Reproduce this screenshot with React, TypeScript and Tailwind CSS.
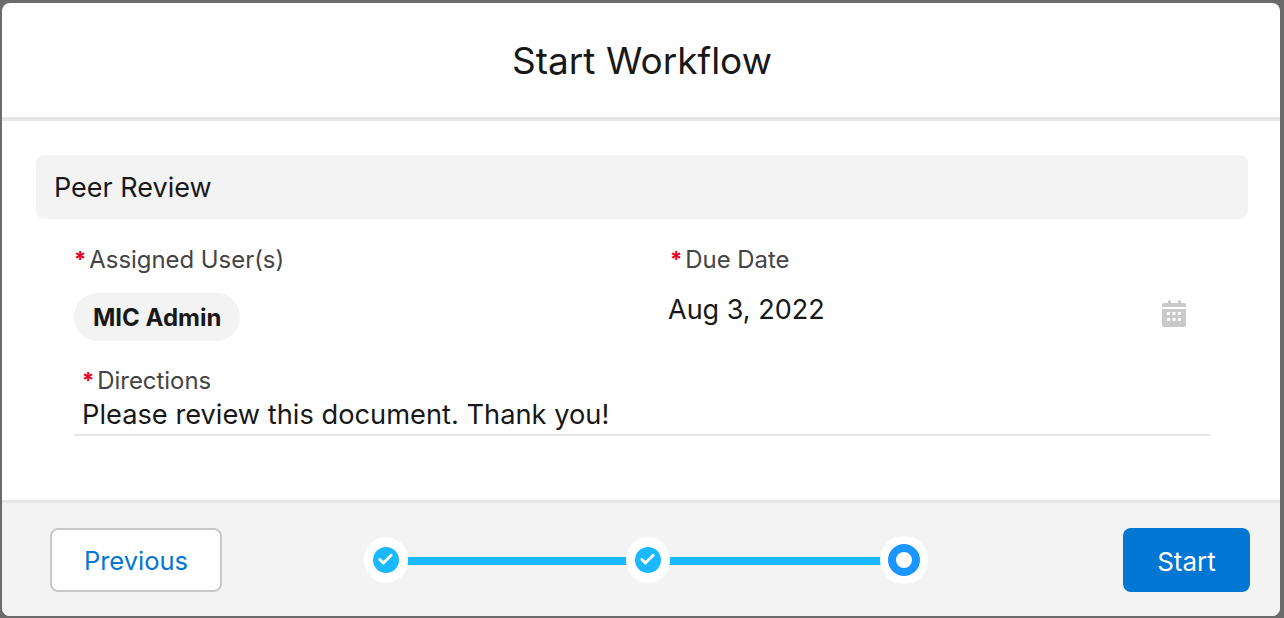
import { Check } from 'lucide-react';

const font = "font-['Inter','Noto_Sans',sans-serif]";

function Label({ text }: { text: string }) {
  return (
    <div className="flex items-start text-[23.9px] leading-[28px] text-[#444444]">
      <span className="mr-[3px] text-[22px] leading-[26px] font-bold text-[#ea001e]">*</span>
      <span>{text}</span>
    </div>
  );
}

function DoneStep() {
  return (
    <div className="z-10 flex h-[46px] w-[44px] shrink-0 items-center justify-center rounded-full bg-white">
      <div className="flex h-[26px] w-[26px] items-center justify-center rounded-full bg-[#1ab9ff]">
        <Check size={17} strokeWidth={4} color="#ffffff" />
      </div>
    </div>
  );
}

function CalendarIcon() {
  return (
    <svg width="24" height="27" viewBox="0 0 24 27" fill="#c9c9c9">
      <rect x="6" y="0" width="3" height="5" rx="1.5" />
      <rect x="16" y="0" width="3" height="5" rx="1.5" />
      <path d="M1.5 3h21A1.5 1.5 0 0 1 24 4.5V7H0V4.5A1.5 1.5 0 0 1 1.5 3z" />
      <path
        fillRule="evenodd"
        d="M0 9h24v16a2 2 0 0 1-2 2H2a2 2 0 0 1-2-2zM5 12h3v3H5zM10.5 12h3v3h-3zM16 12h3v3h-3zM5 18h3v3H5zM10.5 18h3v3h-3zM16 18h3v3h-3z"
      />
    </svg>
  );
}

export default function App() {
  return (
    <div className={`${font} h-[618px] w-[1284px] overflow-hidden bg-[#6b6b6b] pt-[3px] pr-[4px] pb-[2px] pl-[2px]`}>
      <div className="flex h-full flex-col overflow-hidden rounded-[8px] bg-white">
        {/* Header */}
        <div className="flex h-[118px] shrink-0 items-center justify-center border-b-4 border-[#e5e5e5] pt-[2px] pl-[2px]">
          <h1 className="text-[37px] leading-[44px] font-normal text-[#181818]">Start Workflow</h1>
        </div>

        {/* Body */}
        <div className="flex-1 px-[34px] pt-[34px]">
          <div className="flex h-[64px] w-[1212px] items-center rounded-[8px] bg-[#f3f3f3] px-[18px] pt-[2px] text-[27px] text-[#181818]">
            Peer Review
          </div>

          <div className="flex pt-[27px] pl-[38px]">
            <div className="w-[594px]">
              <Label text="Assigned User(s)" />
              <div className="mt-[19px] inline-flex h-[48px] items-center rounded-full bg-[#f3f3f3] px-[19px] pt-[2px] text-[24px] font-bold text-[#181818]">
                MIC Admin
              </div>
            </div>
            <div className="flex w-[518px] flex-col">
              <div className="pl-[2px]">
                <Label text="Due Date" />
              </div>
              <div className="mt-[16px] flex items-start justify-between">
                <span className="text-[27px] leading-[40px] text-[#181818]">Aug 3, 2022</span>
                <div className="mt-[10px]">
                  <CalendarIcon />
                </div>
              </div>
            </div>
          </div>

          <div className="mt-[26px] ml-[38px] w-[1136px] border-b-2 border-[#e5e5e5] pb-[1px]">
            <div className="pl-[8px]">
              <Label text="Directions" />
              <div className="mt-[2px] text-[27.25px] leading-[36px] text-[#181818]">
                Please review this document. Thank you!
              </div>
            </div>
          </div>
        </div>

        {/* Footer */}
        <div className="flex h-[116px] shrink-0 items-center justify-between border-t-[3px] border-[#e5e5e5] bg-[#f3f3f3] pr-[30px] pl-[48px]">
          <button className="h-[64px] w-[172px] rounded-[8px] border-2 border-[#c9c9c9] bg-white pt-[4px] text-[25.5px] text-[#0176d3]">
            Previous
          </button>

          <div className="mr-[54px] flex items-center">
            <DoneStep />
            <div className="-mx-px mt-[2px] h-[8px] w-[220px] bg-[#1ab9ff]" />
            <DoneStep />
            <div className="-mx-px mt-[2px] h-[8px] w-[212px] bg-[#1ab9ff]" />
            <div className="z-10 flex h-[48px] w-[48px] items-center justify-center rounded-full bg-white">
              <div className="h-[32px] w-[32px] rounded-full border-[8px] border-[#1b96ff] bg-white" />
            </div>
          </div>

          <button className="h-[64px] w-[127px] rounded-[8px] bg-[#0176d3] pt-[4px] text-[26px] text-white">Start</button>
        </div>
      </div>
    </div>
  );
}
